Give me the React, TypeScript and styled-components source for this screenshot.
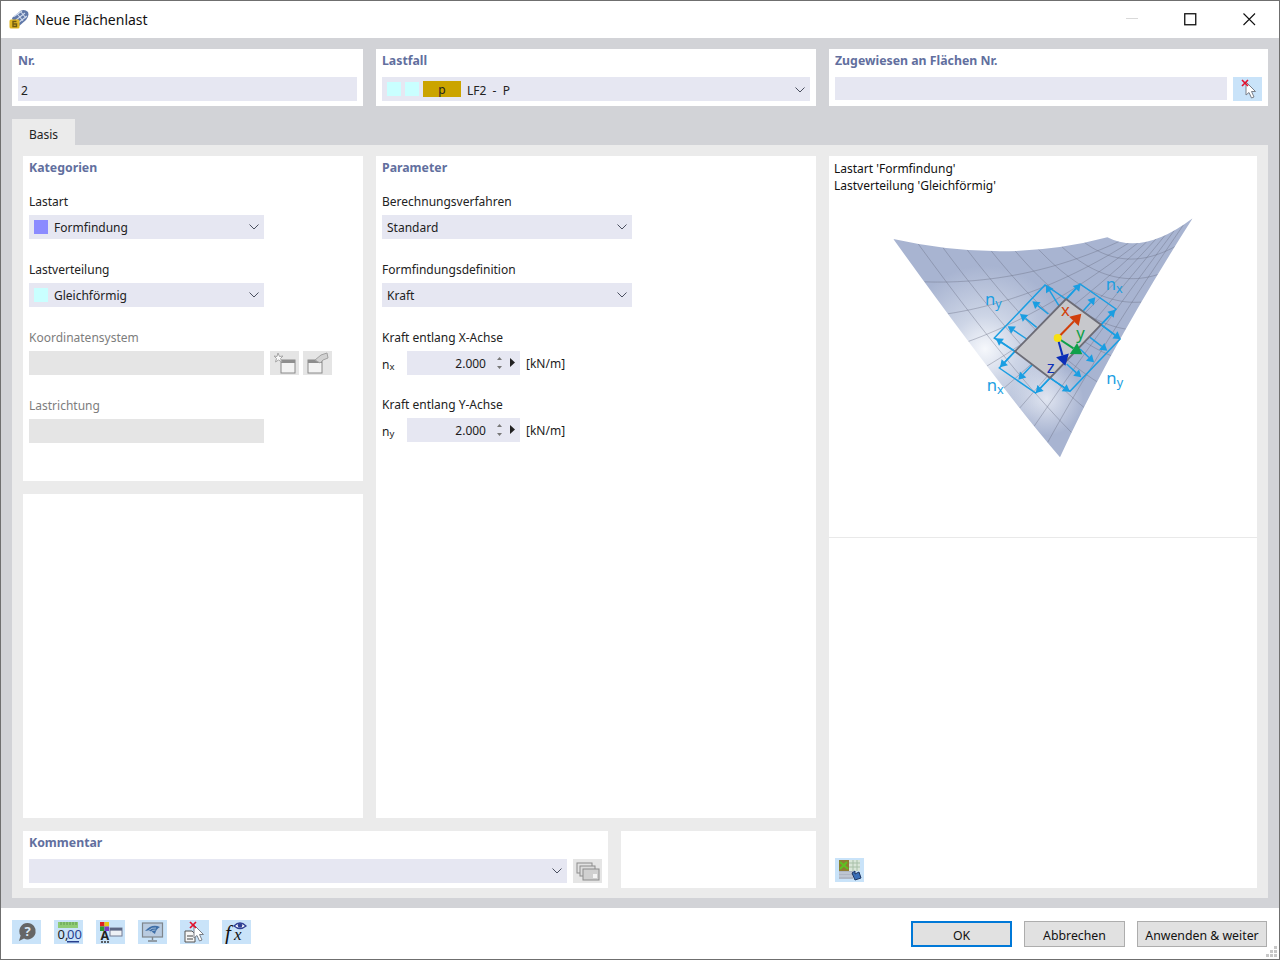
import React from "react";
import styled, { createGlobalStyle } from "styled-components";

const Global = createGlobalStyle`
  html, body { margin: 0; padding: 0; background: #fff; }
  * { box-sizing: border-box; }
  body { font-family: "Noto Sans", "Open Sans", Arial, sans-serif; font-size: 12px; color: #1c1c1c; }
`;

const Win = styled.div`
  width: 1280px; height: 960px; display: flex; flex-direction: column;
  border: 1px solid #6f6f6f; background: #fff; overflow: hidden;
`;
const TitleBar = styled.div`height: 37px; display: flex; align-items: center; padding: 0 0 1px 8px; background: #fff; flex: none;`;
const TitleText = styled.div`font-size: 14px; margin-left: 6px; flex: 1; color: #111;`;
const WinBtn = styled.div<{ $w: number }>`width: ${(p) => p.$w}px; height: 36px; display: flex; align-items: center; justify-content: center;`;
const Body = styled.div`flex: 1; background: #d2d3d7; padding: 11px 11px 10px; display: flex; flex-direction: column;`;
const TopRow = styled.div`display: grid; grid-template-columns: 351px 440px 439px; gap: 13px; height: 57px; flex: none;`;
const Panel = styled.div`background: #fff; padding: 0 6px;`;
const Heading = styled.div`height: 22px; line-height: 24px; font-weight: 700; font-size: 12.3px; color: #626f9e;`;
const TopHeading = styled(Heading)`margin-bottom: 6px;`;
const Control = styled.div<{ $w?: number; $off?: boolean; $h?: number }>`
  width: ${(p) => (p.$w ? p.$w + "px" : "100%")}; height: ${(p) => p.$h ?? 24}px; flex: ${(p) => (p.$w ? "none" : "1")};
  background: ${(p) => (p.$off ? "#e5e5e5" : "#e6e7f2")}; display: flex; align-items: center; padding: 0 5px; gap: 4px; color: #222;
`;
const TopControl = styled(Control)`padding-top: 2px;`;
const NrControl = styled(TopControl)`padding-left: 3px;`;
const Grow = styled.span`flex: 1; white-space: pre;`;
const Swatch = styled.span<{ $c: string; $mr?: number }>`width: 14px; height: 14px; background: ${(p) => p.$c}; flex: none; margin-right: ${(p) => p.$mr ?? 0}px;`;
const TopSwatch = styled(Swatch)`margin-top: -2px;`;
const Gold = styled.span`width: 38px; height: 16px; margin-top: -2px; background: #cba400; text-align: center; line-height: 17px; flex: none; margin-right: 2px;`;
const InlineRow = styled.div`display: flex; gap: 6px; align-items: flex-start;`;
const TabBar = styled.div`height: 26px; margin-top: 13px; flex: none; display: flex;`;
const Tab = styled.div`width: 63px; background: #ebebeb; text-align: center; line-height: 32px; color: #222;`;
const TabPanel = styled.div`flex: 1; background: #ebebeb; padding: 11px 11px 10px; display: grid; grid-template-columns: 793px 428px; gap: 13px;`;
const LeftArea = styled.div`display: flex; flex-direction: column; gap: 13px;`;
const UpperGrid = styled.div`flex: 1; display: grid; grid-template-columns: 340px 440px; gap: 13px;`;
const LeftCol = styled.div`display: grid; grid-template-rows: 325px 324px; gap: 13px;`;
const LowerGrid = styled.div`height: 57px; flex: none; display: grid; grid-template-columns: 585px 195px; gap: 13px;`;
const Fields = styled.div`margin-top: 15px; display: flex; flex-direction: column; gap: 22px;`;
const Field = styled.div``;
const TightField = styled(Field)`margin-top: -1px;`;
const Label = styled.div<{ $off?: boolean }>`height: 18px; line-height: 18px; margin-bottom: 4px; color: ${(p) => (p.$off ? "#7d7d7d" : "#222")};`;
const SpinRow = styled.div`display: flex; align-items: center; height: 24px;`;
const Sym = styled.span`width: 25px; font-size: 12px; padding-top: 2px;`;
const Sub = styled.sub`font-size: 9.5px; vertical-align: baseline; position: relative; top: 1px;`;
const SpinBox = styled.div`width: 113px; height: 24px; background: #e6e7f2; display: flex; align-items: center; justify-content: flex-end; padding-right: 4px;`;
const SpinValue = styled.span`margin-right: 8px;`;
const Unit = styled.span`margin-left: 6px;`;
const RightPanel = styled.div`background: #fff; display: flex; flex-direction: column;`;
const PreviewTop = styled.div`height: 382px; border-bottom: 1px solid #e9e9e9; padding: 4px 5px 0;`;
const PreviewText = styled.div`line-height: 17px; color: #111;`;
const Figure = styled.svg`display: block; margin: 5px 0 0 36px;`;
const PreviewBottom = styled.div`flex: 1; display: flex; align-items: flex-end; padding: 0 6px 6px;`;
const IconBtn = styled.div<{ $tone?: "blue" | "grey" }>`
  width: 29px; height: 24px; flex: none; display: flex; align-items: center; justify-content: center;
  background: ${(p) => (p.$tone === "grey" ? "#e5e5e5" : "#c9e3f9")};
`;
const TightBtn = styled(IconBtn)`margin-left: -2px;`;
const Footer = styled.div`height: 51px; flex: none; display: flex; align-items: flex-start; padding: 12px 12px 0 11px; position: relative; background: #fff;`;
const FooterIcons = styled.div`display: flex; gap: 13px; flex: 1;`;
const FootBtn = styled.div<{ $w: number; $primary?: boolean }>`
  width: ${(p) => p.$w}px; height: 26px; margin-top: 1px; margin-left: 12px; background: #e1e1e1;
  border: ${(p) => (p.$primary ? "2px solid #0078d7" : "1px solid #adadad")};
  display: flex; align-items: center; justify-content: center; font-size: 12.3px; color: #111; padding-top: 3px;
`;
const Grip = styled.svg`position: absolute; right: 1px; bottom: 1px;`;

const Chevron = () => (
  <svg width="10" height="6" viewBox="0 0 10 6" style={{ flex: "none" }}>
    <path d="M0.5 0.5 L5 5 L9.5 0.5" fill="none" stroke="#4a4f5f" strokeWidth="1" />
  </svg>
);
const Spinner = () => (
  <svg width="22" height="18" viewBox="0 0 22 18">
    <path d="M3 6 L5.5 3 L8 6 Z M3 12 L5.5 15 L8 12 Z" fill="#777" />
    <path d="M16 4 L21 8.5 L16 13 Z" fill="#222" />
  </svg>
);

/* ---- surface ---- */
type P = [number, number];
const q = (a: P, c: P, b: P, t: number): P => [
  (1 - t) * (1 - t) * a[0] + 2 * t * (1 - t) * c[0] + t * t * b[0],
  (1 - t) * (1 - t) * a[1] + 2 * t * (1 - t) * c[1] + t * t * b[1],
];
const L: P = [70, 120], T: P = [712, 115], R: P = [968, 58], B: P = [570, 775];
const c0 = (u: number) => q(L, [409, 196], T, u);
const c1 = (u: number) => q(B, [721, 444], R, u);
const d0 = (v: number) => q(L, [380, 552], B, v);
const d1 = (v: number) => q(T, [820, 170], R, v);
const S = (u: number, v: number): P => {
  const a = c0(u), b = c1(u), c = d0(v), d = d1(v);
  const f = (i: 0 | 1) =>
    (1 - v) * a[i] + v * b[i] + (1 - u) * c[i] + u * d[i] -
    ((1 - u) * (1 - v) * L[i] + u * (1 - v) * T[i] + (1 - u) * v * B[i] + u * v * R[i]);
  return [f(0), f(1)];
};
const poly = (fn: (t: number) => P) => {
  const pts: string[] = [];
  for (let k = 0; k <= 24; k++) { const p = fn(k / 24); pts.push(p[0].toFixed(1) + "," + p[1].toFixed(1)); }
  return pts.join(" ");
};
const gridLines: string[] = [];
for (let i = 1; i < 9; i++) {
  const u = i / 9;
  gridLines.push(poly((t) => S(u, t)));
  gridLines.push(poly((t) => S(t, Math.pow(i / 9, 0.85))));
}

const BLUE = "#1a9ee2";
const Arrow = ({ x1, y1, x2, y2, c, w = 4, h = 20 }: { x1: number; y1: number; x2: number; y2: number; c: string; w?: number; h?: number }) => {
  const a = Math.atan2(y2 - y1, x2 - x1);
  const bw = h * 0.62;
  const bx = x2 - h * Math.cos(a), by = y2 - h * Math.sin(a);
  const nx = -Math.sin(a) * bw, ny = Math.cos(a) * bw;
  return (
    <g>
      <line x1={x1} y1={y1} x2={bx} y2={by} stroke={c} strokeWidth={w} />
      <polygon points={`${x2},${y2} ${bx + nx},${by + ny} ${bx - nx},${by - ny}`} fill={c} />
    </g>
  );
};
const NLabel = ({ x, y, s }: { x: number; y: number; s: string }) => (
  <text x={x} y={y} fill={BLUE} fontFamily="Noto Sans, sans-serif" fontSize="50">
    n<tspan fontSize="38" dy="9">{s}</tspan>
  </text>
);
const arrows: number[][] = [
  [570, 325, 528, 258], [535, 345, 487, 307], [500, 385, 450, 345], [470, 420, 413, 382], [435, 457, 377, 418],
  [640, 335, 676, 295], [590, 300, 632, 254], [693, 377, 736, 332],
  [660, 415, 712, 455], [630, 450, 672, 490], [590, 495, 634, 535], [693, 377, 752, 420], [540, 537, 600, 578],
  [435, 457, 390, 505], [487, 497, 445, 542], [540, 537, 497, 582],
];
const Surface = () => (
  <Figure width="340" height="270" viewBox="0 0 1020 810">
    <defs>
      <radialGradient id="hl" gradientUnits="userSpaceOnUse" cx="345" cy="450" r="250">
        <stop offset="0" stopColor="#f6f8fc" />
        <stop offset="0.4" stopColor="#cdd5e6" />
        <stop offset="1" stopColor="#a8b4d1" />
      </radialGradient>
      <radialGradient id="hl2" gradientUnits="userSpaceOnUse" cx="530" cy="600" r="110">
        <stop offset="0" stopColor="#eef1f8" stopOpacity="0.8" />
        <stop offset="1" stopColor="#eef1f8" stopOpacity="0" />
      </radialGradient>
      <clipPath id="sf"><path d="M70 120 Q409 196 712 115 Q820 170 968 58 Q721 444 570 775 Q380 552 70 120 Z" /></clipPath>
    </defs>
    <g clipPath="url(#sf)">
      <rect width="1020" height="810" fill="url(#hl)" />
      <rect width="1020" height="810" fill="url(#hl2)" />
      {gridLines.map((p, i) => (
        <polyline key={i} points={p} fill="none" stroke="#666c82" strokeWidth="1.8" opacity="0.65" />
      ))}
    </g>
    <path d="M373 417 L525 258 L588 300 L630 255 L738 330 L693 377 L750 420 L600 577 L540 537 L497 582 L388 507 L435 457 Z" fill="none" stroke={BLUE} strokeWidth="4.5" />
    {arrows.map((a, i) => (
      <Arrow key={i} x1={a[0]} y1={a[1]} x2={a[2]} y2={a[3]} c={BLUE} w={4.5} h={21} />
    ))}
    <polygon points="588,300 693,377 540,537 435,457" fill="#c7c8cc" stroke="#6c6c76" strokeWidth="5.5" />
    <Arrow x1={563} y1={417} x2={634} y2={344} c="#d13f0a" w={6} h={32} />
    <Arrow x1={563} y1={417} x2={637} y2={466} c="#0fa04a" w={6} h={32} />
    <Arrow x1={563} y1={417} x2={586} y2={500} c="#0c2fb8" w={6} h={32} />
    <circle cx="563" cy="417" r="12" fill="#f7e012" />
    <text x="573" y="352" fill="#d13f0a" fontFamily="Noto Sans, sans-serif" fontSize="50">x</text>
    <text x="619" y="421" fill="#0fa04a" fontFamily="Noto Sans, sans-serif" fontSize="50">y</text>
    <text x="530" y="521" fill="#0c2fb8" fontFamily="Noto Sans, sans-serif" fontSize="50">z</text>
    <NLabel x={707} y={274} s="x" />
    <NLabel x={345} y={318} s="y" />
    <NLabel x={350} y={577} s="x" />
    <NLabel x={709} y={554} s="y" />
  </Figure>
);

/* ---- icons ---- */
const AppIcon = () => (
  <svg width="20" height="20" viewBox="0 0 20 20">
    <path d="M3 9 L12 1.5 Q16 0 19 3 Q20.5 7 17 11 L9 18 Q4 15 3 9 Z" fill="#5f78a8" />
    <path d="M5 7.5 L13 2 M7 11 L16 4 M9 14 L18 7 M8 4.5 L14 12 M11.5 2.5 L17 9" stroke="#cfdaec" strokeWidth="1.1" fill="none" />
    <rect x="0.5" y="10.5" width="10" height="9" rx="1.5" fill="#e0b624" />
    <path d="M7.5 12.5 H4 V17.5 H7.5 V15 H4.5" fill="none" stroke="#6e5a12" strokeWidth="1.4" />
  </svg>
);
const CursorX = () => (
  <svg width="29" height="24" viewBox="0 0 29 24">
    <path d="M13 5 L13 18 L16 15.5 L18.5 21 L21 20 L18.5 14.5 L22.5 14.5 Z" fill="#fff" stroke="#7a7f88" strokeWidth="1" />
    <path d="M9 3 L15 9 M15 3 L9 9" stroke="#e3102c" strokeWidth="1.6" />
  </svg>
);
const NewWin = () => (
  <svg width="29" height="24" viewBox="0 0 29 24">
    <rect x="11" y="9" width="14" height="13" fill="#f3f3f3" stroke="#8a8a8a" />
    <rect x="11" y="9" width="14" height="3" fill="#8e8e8e" />
    <path d="M8 2 L9.5 5.5 L13 5 L10.5 7.5 L12 11 L8.5 9 L5.5 11 L6.5 7.5 L4 5 L7 5.5 Z" fill="#fafafa" stroke="#a6a6a6" />
  </svg>
);
const EditWin = () => (
  <svg width="29" height="24" viewBox="0 0 29 24">
    <rect x="5" y="9" width="14" height="13" fill="#f3f3f3" stroke="#8a8a8a" />
    <rect x="5" y="9" width="14" height="3" fill="#8e8e8e" />
    <path d="M12 9 L18 4 L24 2 L25 7 L20 9 L17 12 Z" fill="#d2d2d2" stroke="#a2a2a2" />
  </svg>
);
const CopyWin = () => (
  <svg width="29" height="24" viewBox="0 0 29 24">
    <rect x="4" y="4" width="15" height="10" fill="#e2e2e2" stroke="#8c8c8c" />
    <rect x="7" y="7" width="15" height="10" fill="#dcdcdc" stroke="#8c8c8c" />
    <rect x="10" y="10" width="16" height="11" fill="#d0d0d0" stroke="#8c8c8c" />
    <rect x="20" y="15" width="4" height="4" fill="#f4f4f4" />
  </svg>
);
const SceneIcon = () => (
  <svg width="29" height="24" viewBox="0 0 29 24">
    <rect x="4" y="2" width="10" height="11" fill="#8f7d32" />
    <path d="M5 4 L13 11 M5 11 L12 4" stroke="#5cc322" strokeWidth="2" />
    <path d="M14 2h11v11H14Z" fill="#d9e6d9" />
    <path d="M14 5h11M14 9h11M18 2v11M22 2v11" stroke="#a9c0a9" />
    <rect x="4" y="13" width="14" height="8" fill="#aeb6c4" />
    <path d="M4 15h14M4 18h14" stroke="#ced4de" />
    <path d="M17 15 L20 13 L20 16 L24 14 L26 20 L20 22 Z" fill="#3a6fb8" stroke="#1e3560" />
  </svg>
);
const HelpIcon = () => (
  <svg width="29" height="24" viewBox="0 0 29 24">
    <path d="M15.5 3 a8.2 8.2 0 1 1 -3.5 15.6 L7 21 L8.6 15.6 A8.2 8.2 0 0 1 15.5 3 Z" fill="#666" />
    <text x="15.5" y="16" textAnchor="middle" fontSize="13" fontWeight="700" fontFamily="Noto Sans, sans-serif" fill="#dbe8f4">?</text>
  </svg>
);
const DecimalsIcon = () => (
  <svg width="29" height="24" viewBox="0 0 29 24">
    <rect x="4" y="2" width="20" height="6" fill="#8fcb75" />
    <path d="M7 2v3M10 2v3M13 2v3M16 2v3M19 2v3M22 2v3" stroke="#5e9a4e" />
    <text x="3.5" y="19" fontSize="13" fontFamily="Noto Sans, sans-serif" fill="#222">0,</text>
    <text x="13" y="19" fontSize="13" fontFamily="Noto Sans, sans-serif" fill="#27408f">00</text>
    <rect x="13" y="21" width="12" height="1.5" fill="#27408f" />
  </svg>
);
const StyleIcon = () => (
  <svg width="29" height="24" viewBox="0 0 29 24">
    <rect x="4" y="2" width="4.5" height="4.5" fill="#d22" /><rect x="8.5" y="2" width="4.5" height="4.5" fill="#e6c814" />
    <rect x="4" y="6.5" width="4.5" height="4.5" fill="#2a9a34" /><rect x="8.5" y="6.5" width="4.5" height="4.5" fill="#7a3bc4" />
    <text x="4.5" y="20" fontSize="12.5" fontWeight="700" fontFamily="Noto Sans, sans-serif" fill="#222">A</text>
    <path d="M5 22h2M8 22h2M11 22h2" stroke="#333" strokeWidth="1.4" />
    <rect x="14" y="8" width="12" height="8" fill="#eef1f6" stroke="#737b93" />
    <rect x="14" y="8" width="12" height="2.6" fill="#5d6885" />
  </svg>
);
const ScreenIcon = () => (
  <svg width="29" height="24" viewBox="0 0 29 24">
    <rect x="4.5" y="3" width="20" height="14" fill="#b9cbe0" stroke="#7f858b" strokeWidth="1.2" />
    <path d="M7 11 Q14 3 22 7 Q18 9 17 14 Q12 9 7 11 Z" fill="#3f6fa8" />
    <path d="M10 11 Q14 7 18 8 M12 12.5 Q15 9.5 17.5 10" stroke="#9fbad6" fill="none" />
    <path d="M14.5 17v3M10 21h9" stroke="#7f858b" strokeWidth="1.4" />
  </svg>
);
const DocCursorIcon = () => (
  <svg width="29" height="24" viewBox="0 0 29 24">
    <path d="M5 11h7l3 3v8H5Z" fill="#f5f5f5" stroke="#555" />
    <path d="M7 16h6M7 19h6" stroke="#444" />
    <path d="M14 5 L14 18 L17 15.5 L19.5 21 L22 20 L19.5 14.5 L23.5 14.5 Z" fill="#fff" stroke="#7a7f88" />
    <path d="M10 2 L16 8 M16 2 L10 8" stroke="#e3102c" strokeWidth="1.7" />
  </svg>
);
const FxIcon = () => (
  <svg width="29" height="24" viewBox="0 0 29 24">
    <text x="3" y="20" fontSize="21" fontStyle="italic" fontFamily="Liberation Serif, serif" fill="#111">f</text>
    <text x="12" y="20" fontSize="17" fontStyle="italic" fontFamily="Liberation Serif, serif" fill="#111">x</text>
    <path d="M12 6 Q18 0 24 6 Q18 11 12 6 Z" fill="#fff" stroke="#2f3f94" strokeWidth="1.3" />
    <circle cx="18" cy="5.5" r="2.3" fill="#2f3f94" />
  </svg>
);

export default function App() {
  return (
    <>
      <Global />
      <Win>
        <TitleBar>
          <AppIcon />
          <TitleText>Neue Flächenlast</TitleText>
          <WinBtn $w={58}><svg width="12" height="2"><rect width="12" height="1" fill="#d9d9d9" /></svg></WinBtn>
          <WinBtn $w={58}><svg width="13" height="13"><rect x=".75" y=".75" width="11" height="11" fill="none" stroke="#111" strokeWidth="1.3" /></svg></WinBtn>
          <WinBtn $w={60}><svg width="13" height="13"><path d="M.5 .5 L12 12 M12 .5 L.5 12" stroke="#111" strokeWidth="1.1" /></svg></WinBtn>
        </TitleBar>
        <Body>
          <TopRow>
            <Panel>
              <TopHeading>Nr.</TopHeading>
              <NrControl>2</NrControl>
            </Panel>
            <Panel>
              <TopHeading>Lastfall</TopHeading>
              <TopControl>
                <TopSwatch $c="#c9ffff" />
                <TopSwatch $c="#c9ffff" />
                <Gold>p</Gold>
                <Grow>LF2  -  P</Grow>
                <Chevron />
              </TopControl>
            </Panel>
            <Panel>
              <TopHeading>Zugewiesen an Flächen Nr.</TopHeading>
              <InlineRow>
                <Control $h={23} />
                <IconBtn><CursorX /></IconBtn>
              </InlineRow>
            </Panel>
          </TopRow>
          <TabBar><Tab>Basis</Tab></TabBar>
          <TabPanel>
            <LeftArea>
              <UpperGrid>
                <LeftCol>
                  <Panel>
                    <Heading>Kategorien</Heading>
                    <Fields>
                      <Field>
                        <Label>Lastart</Label>
                        <Control $w={235}><Swatch $c="#8b8bff" $mr={2} /><Grow>Formfindung</Grow><Chevron /></Control>
                      </Field>
                      <Field>
                        <Label>Lastverteilung</Label>
                        <Control $w={235}><Swatch $c="#c9ffff" $mr={2} /><Grow>Gleichförmig</Grow><Chevron /></Control>
                      </Field>
                      <Field>
                        <Label $off>Koordinatensystem</Label>
                        <InlineRow>
                          <Control $w={235} $off />
                          <IconBtn $tone="grey"><NewWin /></IconBtn>
                          <TightBtn $tone="grey"><EditWin /></TightBtn>
                        </InlineRow>
                      </Field>
                      <Field>
                        <Label $off>Lastrichtung</Label>
                        <Control $w={235} $off />
                      </Field>
                    </Fields>
                  </Panel>
                  <Panel />
                </LeftCol>
                <Panel>
                  <Heading>Parameter</Heading>
                  <Fields>
                    <Field>
                      <Label>Berechnungsverfahren</Label>
                      <Control $w={250}><Grow>Standard</Grow><Chevron /></Control>
                    </Field>
                    <Field>
                      <Label>Formfindungsdefinition</Label>
                      <Control $w={250}><Grow>Kraft</Grow><Chevron /></Control>
                    </Field>
                    <Field>
                      <Label>Kraft entlang X-Achse</Label>
                      <SpinRow>
                        <Sym>n<Sub>x</Sub></Sym>
                        <SpinBox>
                          <SpinValue>2.000</SpinValue>
                          <Spinner />
                        </SpinBox>
                        <Unit>[kN/m]</Unit>
                      </SpinRow>
                    </Field>
                    <TightField>
                      <Label>Kraft entlang Y-Achse</Label>
                      <SpinRow>
                        <Sym>n<Sub>y</Sub></Sym>
                        <SpinBox>
                          <SpinValue>2.000</SpinValue>
                          <Spinner />
                        </SpinBox>
                        <Unit>[kN/m]</Unit>
                      </SpinRow>
                    </TightField>
                  </Fields>
                </Panel>
              </UpperGrid>
              <LowerGrid>
                <Panel>
                  <TopHeading>Kommentar</TopHeading>
                  <InlineRow>
                    <Control $w={538}><Grow /><Chevron /></Control>
                    <IconBtn $tone="grey"><CopyWin /></IconBtn>
                  </InlineRow>
                </Panel>
                <Panel />
              </LowerGrid>
            </LeftArea>
            <RightPanel>
              <PreviewTop>
                <PreviewText>Lastart 'Formfindung'</PreviewText>
                <PreviewText>Lastverteilung 'Gleichförmig'</PreviewText>
                <Surface />
              </PreviewTop>
              <PreviewBottom>
                <IconBtn><SceneIcon /></IconBtn>
              </PreviewBottom>
            </RightPanel>
          </TabPanel>
        </Body>
        <Footer>
          <FooterIcons>
            <IconBtn><HelpIcon /></IconBtn>
            <IconBtn><DecimalsIcon /></IconBtn>
            <IconBtn><StyleIcon /></IconBtn>
            <IconBtn><ScreenIcon /></IconBtn>
            <IconBtn><DocCursorIcon /></IconBtn>
            <IconBtn><FxIcon /></IconBtn>
          </FooterIcons>
          <FootBtn $w={101} $primary>OK</FootBtn>
          <FootBtn $w={101}>Abbrechen</FootBtn>
          <FootBtn $w={130}>Anwenden &amp; weiter</FootBtn>
          <Grip width="12" height="12" viewBox="0 0 12 12">
            <path d="M8 0h3v3H8ZM4 4h3v3H4ZM8 4h3v3H8ZM0 8h3v3H0ZM4 8h3v3H4ZM8 8h3v3H8Z" fill="#c8c8c8" />
          </Grip>
        </Footer>
      </Win>
    </>
  );
}
